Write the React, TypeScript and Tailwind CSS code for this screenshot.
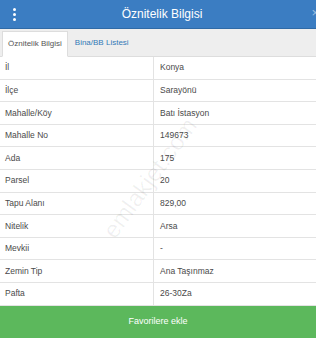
import React, { useState } from "react";

const rows = [
  ["İl", "Konya"],
  ["İlçe", "Sarayönü"],
  ["Mahalle/Köy", "Batı İstasyon"],
  ["Mahalle No", "149673"],
  ["Ada", "175"],
  ["Parsel", "20"],
  ["Tapu Alanı", "829,00"],
  ["Nitelik", "Arsa"],
  ["Mevkii", "-"],
  ["Zemin Tip", "Ana Taşınmaz"],
  ["Pafta", "26-30Za"],
];

export default function App() {
  const [tab, setTab] = useState("oznitelik");

  return (
    <div className="relative w-[316px] h-[338px] overflow-hidden bg-white flex flex-col font-['Liberation_Sans',Arial,sans-serif]">
      {/* Header */}
      <div className="h-[29px] shrink-0 bg-[#3b7dc2] border-b border-[#2f6aa6] flex items-center relative">
        <div className="w-[28px] flex flex-col items-center gap-[2px]">
          <span className="w-[3px] h-[3px] bg-white rounded-full" />
          <span className="w-[3px] h-[3px] bg-white rounded-full" />
          <span className="w-[3px] h-[3px] bg-white rounded-full" />
        </div>
        <div className="flex-1 text-center text-white text-[12px] pr-[20px]">Öznitelik Bilgisi</div>
        <span className="absolute right-[-3px] top-[6px] text-[#9fbedf] text-[13px] leading-none">×</span>
      </div>

      {/* Tabs */}
      <div className="h-[28px] shrink-0 bg-[#eeeeee] border-b border-[#dddddd] flex items-end pl-[2px]">
        <button
          onClick={() => setTab("oznitelik")}
          className={`h-[26px] px-[5px] text-[8px] ${tab === "oznitelik" ? "bg-white text-[#555555] border border-[#dddddd] border-b-white -mb-px" : "text-[#337ab7]"}`}
        >
          Öznitelik Bilgisi
        </button>
        <button
          onClick={() => setTab("bina")}
          className={`h-[26px] px-[7px] text-[8px] ${tab === "bina" ? "bg-white text-[#555555] border border-[#dddddd] border-b-white -mb-px" : "text-[#337ab7]"}`}
        >
          Bina/BB Listesi
        </button>
      </div>

      {/* Table */}
      <div className="flex-1 flex flex-col">
        {rows.map(([label, value]) => (
          <div key={label} className="h-[22.6px] flex border-b border-[#e3e3e3] text-[8.5px] text-[#4a4a4a]">
            <div className="w-[154px] pl-[5px] flex items-center border-r border-[#e3e3e3]">{label}</div>
            <div className="flex-1 pl-[6px] flex items-center">{value}</div>
          </div>
        ))}
      </div>

      {/* Button */}
      <button className="h-[32px] shrink-0 bg-[#5cb85c] text-white text-[9px] flex items-center justify-center">
        Favorilere ekle
      </button>

      {/* Watermark */}
      <div className="absolute left-[150px] top-[178px] -translate-x-1/2 -translate-y-1/2 -rotate-[54deg] text-[24px] text-black/[0.06] pointer-events-none whitespace-nowrap">
        emlakjet.com
      </div>
    </div>
  );
}
